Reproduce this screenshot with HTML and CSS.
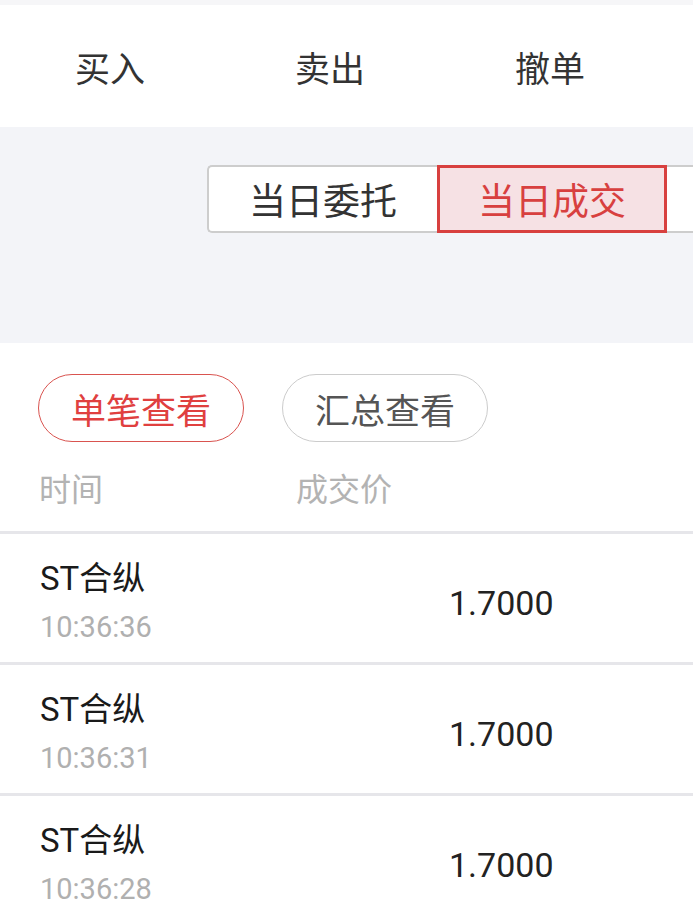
FILE: index.html
```html
<!DOCTYPE html>
<html>
<head>
    <meta charset="utf-8">
    <title>当日成交</title>
    <link rel="stylesheet" href="styles.css">
</head>
<body>
    <div class="top-strip"></div>

    <div class="tabs">
        <div class="tab">买入</div>
        <div class="tab">卖出</div>
        <div class="tab">撤单</div>
    </div>

    <div class="panel">
        <div class="segments">
            <div class="seg seg-first">当日委托</div>
            <div class="seg seg-active">当日成交</div>
            <div class="seg seg-rest"></div>
        </div>
    </div>

    <div class="filters">
        <div class="pill pill-active">单笔查看</div>
        <div class="pill">汇总查看</div>
    </div>

    <div class="list-head">
        <span class="col-time">时间</span>
        <span class="col-price">成交价</span>
    </div>

    <div class="list">
        <div class="row">
            <div class="row-left">
                <div class="name">ST合纵</div>
                <div class="time">10:36:36</div>
            </div>
            <div class="price">1.7000</div>
        </div>
        <div class="row">
            <div class="row-left">
                <div class="name">ST合纵</div>
                <div class="time">10:36:31</div>
            </div>
            <div class="price">1.7000</div>
        </div>
        <div class="row">
            <div class="row-left">
                <div class="name">ST合纵</div>
                <div class="time">10:36:28</div>
            </div>
            <div class="price">1.7000</div>
        </div>
    </div>
</body>
</html>
```

FILE: styles.css
```css
body {
    font-family: Roboto, "Noto Sans CJK SC", sans-serif;
    background-color: #fff;
    margin: 0;
    padding: 0;
    overflow-x: hidden;
}

.top-strip {
    height: 5px;
    background-color: #f6f6f8;
}

.tabs {
    display: flex;
    height: 122px;
    align-items: center;
}

.tab {
    width: 220px;
    flex-shrink: 0;
    text-align: center;
    font-size: 35px;
    color: #333;
}

.panel {
    background-color: #f3f4f8;
    height: 216px;
    padding: 38px 0 0 207px;
    box-sizing: border-box;
    overflow: hidden;
}

.segments {
    display: flex;
    width: 700px;
}

.seg {
    width: 230px;
    height: 68px;
    flex-shrink: 0;
    box-sizing: border-box;
    background-color: #fff;
    display: flex;
    align-items: center;
    justify-content: center;
    font-size: 37px;
    color: #333;
}

.seg-first {
    border: 2px solid #cdcdcd;
    border-right: none;
    border-radius: 5px 0 0 5px;
}

.seg-active {
    border: 3px solid #d8403f;
    background-color: #f6e1e4;
    color: #d8403f;
}

.seg-rest {
    border-top: 2px solid #cdcdcd;
    border-bottom: 2px solid #cdcdcd;
}

.filters {
    display: flex;
    gap: 38px;
    padding: 31px 0 0 38px;
}

.pill {
    width: 206px;
    height: 68px;
    box-sizing: border-box;
    border: 1px solid #cccccc;
    border-radius: 34px;
    display: flex;
    align-items: center;
    justify-content: center;
    font-size: 35px;
    color: #555;
}

.pill-active {
    border-color: #d9534f;
    color: #e0403f;
}

.list-head {
    display: flex;
    height: 89px;
    align-items: center;
    padding-left: 39px;
    font-size: 32px;
    color: #b3b3b3;
}

.col-time {
    width: 257px;
}

.row {
    display: flex;
    align-items: center;
    height: 131px;
    box-sizing: border-box;
    border-top: 3px solid #e6e6ea;
    padding: 9px 0 0 40px;
}

.row-left {
    width: 409px;
}

.name {
    font-size: 33px;
    color: #1a1a1a;
    line-height: 40px;
}

.time {
    font-size: 29px;
    color: #b0b0b0;
    line-height: 40px;
    margin-top: 8px;
}

.price {
    font-size: 34px;
    color: #222;
}
```
